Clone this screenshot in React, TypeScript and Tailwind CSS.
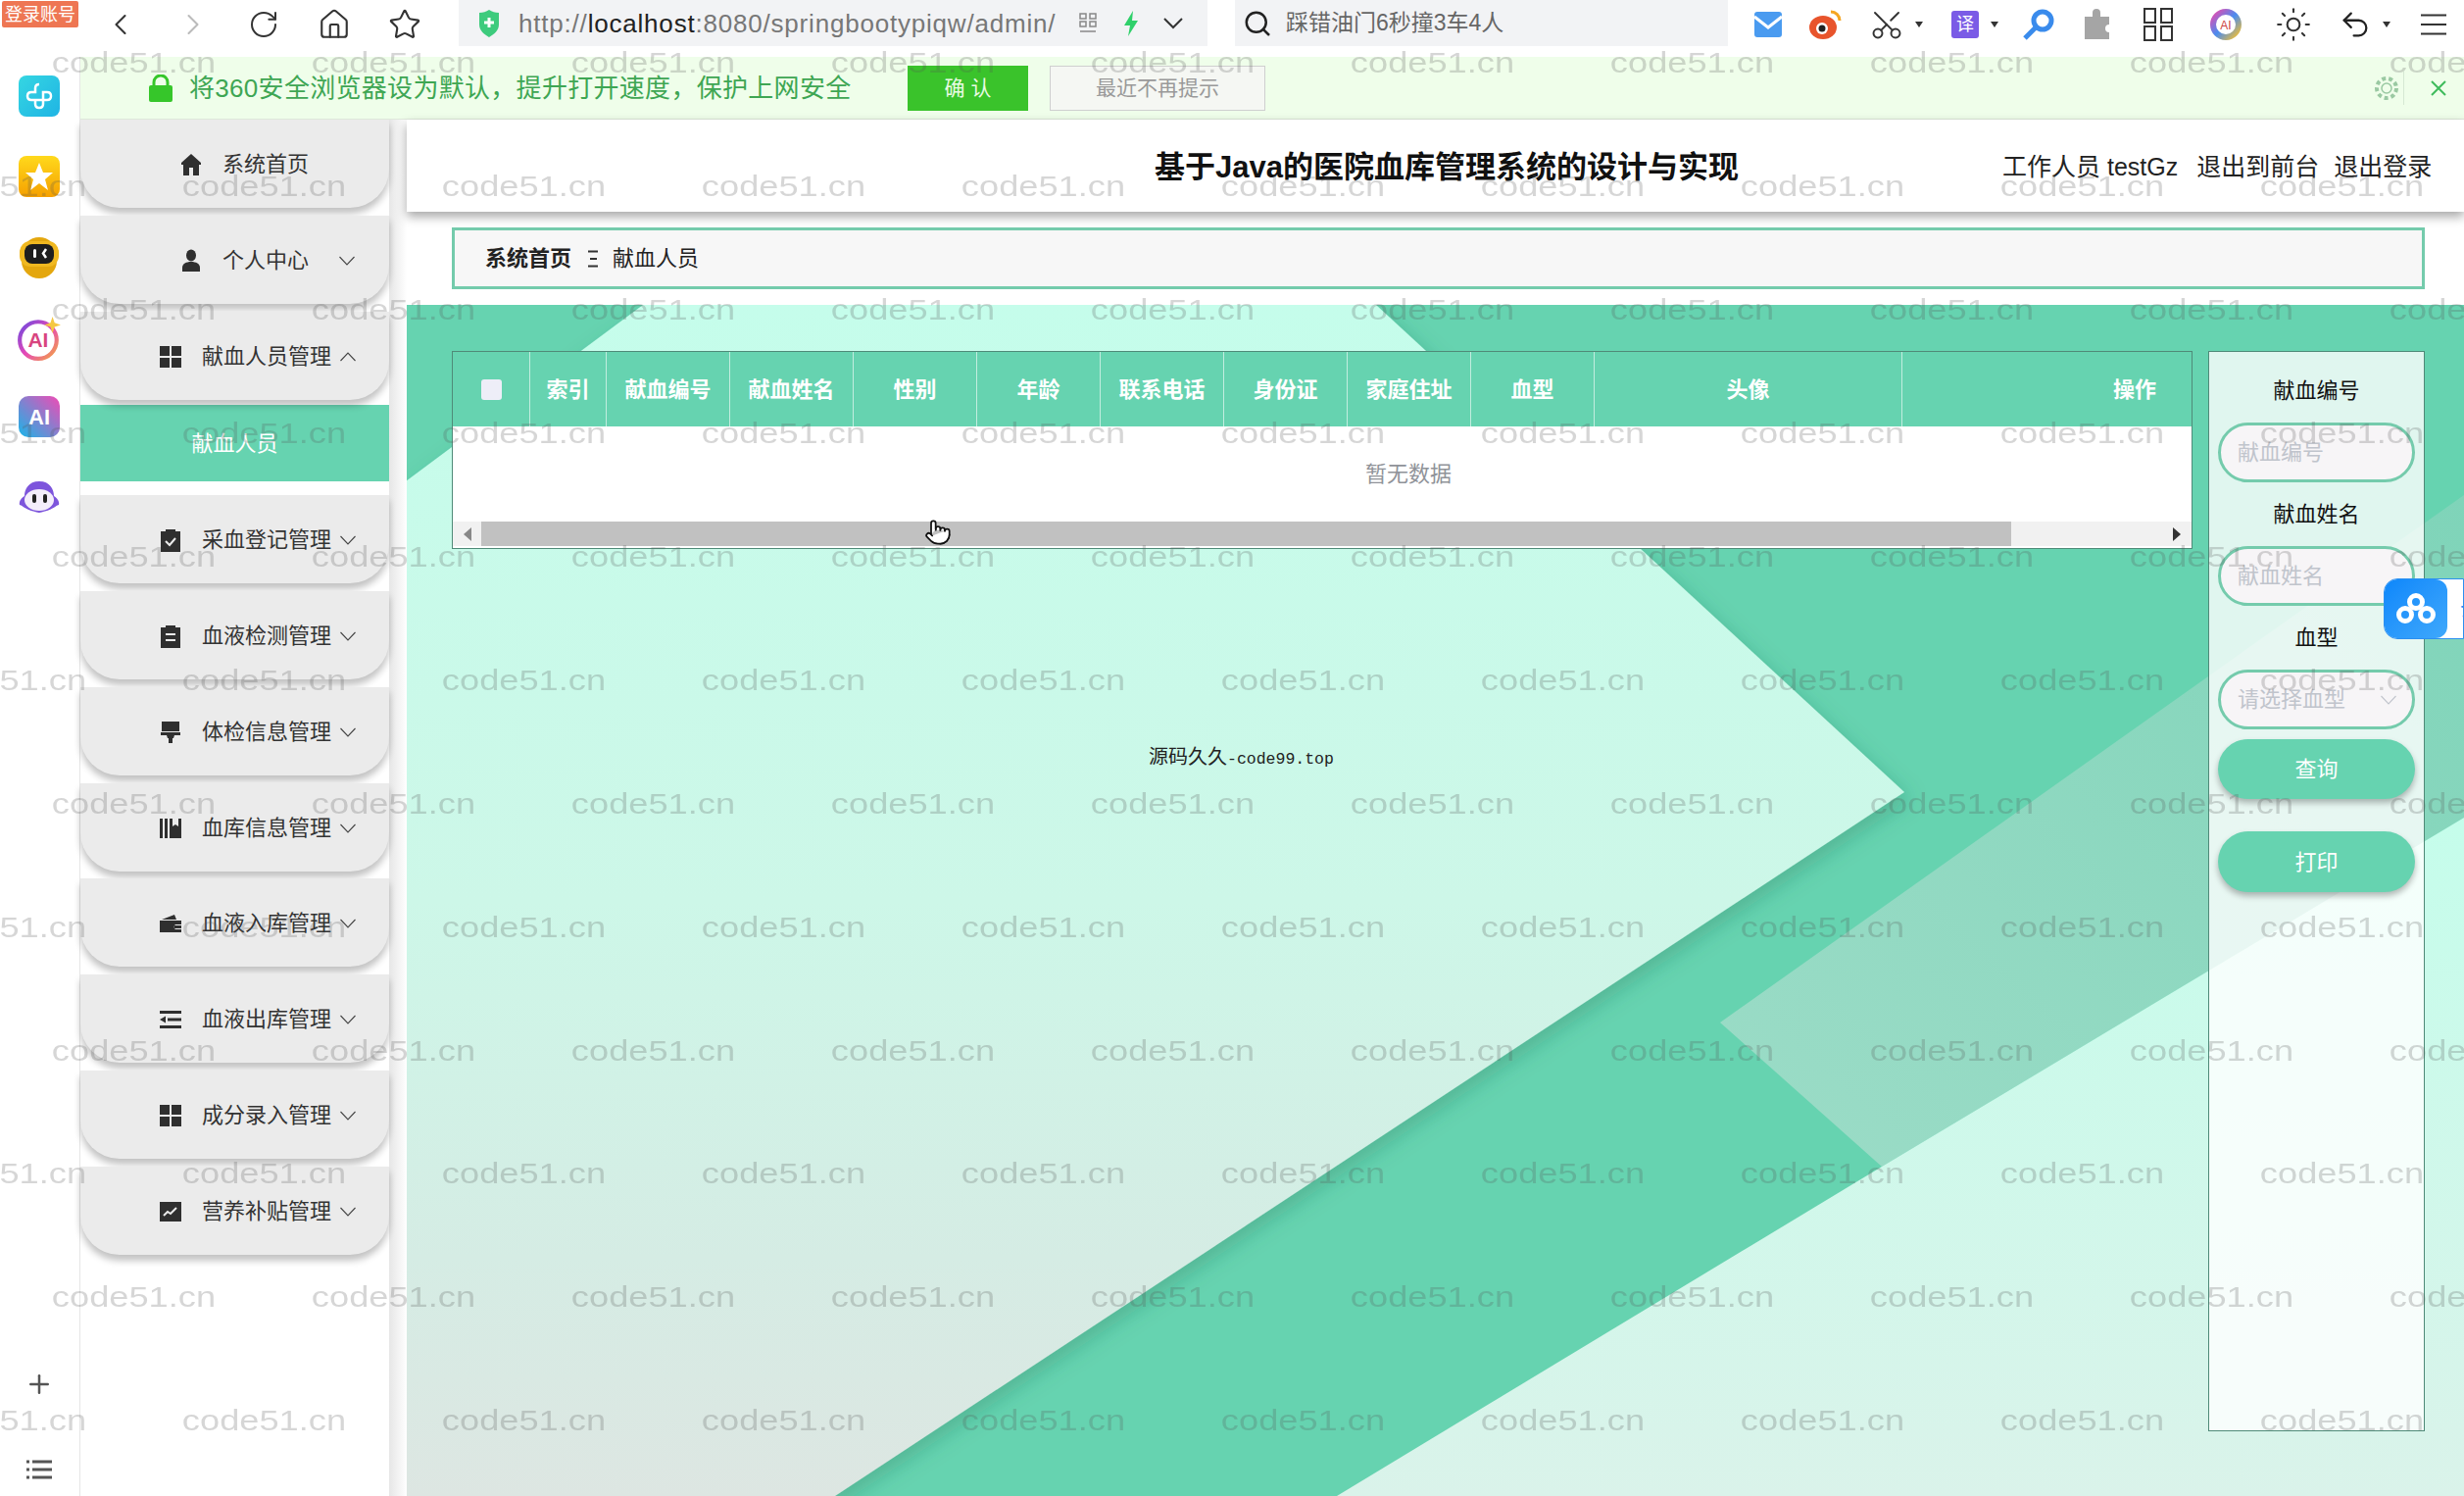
import React from "react";
import { ChevronLeft, ChevronRight, RotateCw, Home, Star, Search, Scissors, Sun, Undo2, Plus, Pointer } from "lucide-react";

const Chev = ({ up = false, light = false }: { up?: boolean; light?: boolean }) => (
  <svg width="16" height="10" viewBox="0 0 16 10" className="shrink-0">
    <polyline points={up ? "0.5,9 8,1 15.5,9" : "0.5,1 8,9 15.5,1"} fill="none" stroke={light ? "#c0c4cc" : "#444"} strokeWidth="1.1" />
  </svg>
);

const I = ({ children }: { children: React.ReactNode }) => (
  <svg width="24" height="24" viewBox="0 0 24 24" fill="#2f2f2f" className="shrink-0">{children}</svg>
);

const icons: Record<string, React.ReactNode> = {
  home: <I><path d="M12 1 2 10v2h2v11h6v-8h4v8h6V12h2v-2z" /></I>,
  user: <I><ellipse cx="12" cy="6.5" rx="5" ry="6" /><path d="M3 23v-4c0-4 4-6 9-6s9 2 9 6v4z" /></I>,
  grid: <I><rect x="1" y="1" width="10" height="10" /><rect x="13" y="1" width="10" height="10" /><rect x="1" y="13" width="10" height="10" /><rect x="13" y="13" width="10" height="10" /></I>,
  claim: <I><path d="M2 3h5V1h10v2h5v21H2z" /><path d="m7 13 4 4 6-7" fill="none" stroke="#ebebeb" strokeWidth="2" /></I>,
  order: <I><path d="M2 3h5V1h10v2h5v21H2z" /><path d="M7 10h10M7 16h10" stroke="#ebebeb" strokeWidth="2" /></I>,
  brush: <I><path d="M3 1h18v10H3zM2 12h20v3h-6l-1 3h-1v5h-4v-5H9l-1-3H2z" /></I>,
  book: <I><rect x="1" y="2" width="3" height="20" /><rect x="6" y="2" width="3" height="20" /><path d="M11 2h12v20H11zM14 2v8l3-2 3 2V2z" fillRule="evenodd" /></I>,
  wallet: <I><path d="M3 8 16 3l2 5zM1 9h22v4h-6a3 3 0 0 0 0 5h6v3H1z" /><rect x="16" y="14" width="7" height="3" /></I>,
  fold: <I><rect x="1" y="3" width="22" height="3" /><rect x="9" y="10.5" width="14" height="3" /><rect x="1" y="18" width="22" height="3" /><path d="M1 12l6-3.5v7z" /></I>,
  chart: <I><path d="M1 2h22v20H1z" /><path d="m5 16 4-4 3 2 6-6" fill="none" stroke="#ebebeb" strokeWidth="2" /></I>,
};

const Item = ({ icon, label, chev, up, short }: { icon: string; label: string; chev?: boolean; up?: boolean; short?: boolean }) => (
  <div className={`relative flex h-[90px] mb-[7.75px] items-center rounded-b-[40px] bg-[#ebebeb] pt-[2px] shadow-[0_6px_7px_rgba(0,0,0,0.24)] ${short ? "pl-[101px]" : "pl-[80px]"}`}>
    {icons[icon]}
    <span className="ml-[20px] text-[22px] leading-none text-[#333]">{label}</span>
    {chev && <span className={short ? "ml-[31px]" : "ml-[9px]"}><Chev up={up} /></span>}
  </div>
);

const cols = [79, 78, 126, 126, 126, 126, 126, 126, 126, 126, 314];
const heads = ["", "索引", "献血编号", "献血姓名", "性别", "年龄", "联系电话", "身份证", "家庭住址", "血型", "头像"];

const Field = ({ label, ph, select }: { label: string; ph: string; select?: boolean }) => (
  <>
    <div className="flex h-[65px] items-center justify-center text-[22px] text-[#111]">{label}</div>
    <div className="flex h-[61px] items-center justify-between rounded-full border-[3px] border-[#74cbac] bg-[#f7f5f7] pl-[17px] pr-[16px] text-[22px] text-[#c0c4cc]">
      <span>{ph}</span>
      {select && <Chev light />}
    </div>
  </>
);

const Watermark = () => (
  <div className="pointer-events-none absolute inset-0 z-50 overflow-hidden pt-[2px]">
    {Array.from({ length: 12 }).map((_, r) => (
      <div key={r} className={`flex h-[125.9px] items-center ${r % 2 ? "-ml-[128px]" : "ml-[4px]"}`}>
        {Array.from({ length: 11 }).map((_, c) => (
          <div key={c} className="w-[265px] shrink-0 scale-x-125 text-center font-['Liberation_Sans'] text-[29px] leading-none text-[rgba(85,85,85,0.24)]">code51.cn</div>
        ))}
      </div>
    ))}
  </div>
);

const Background = () => (
  <svg viewBox="415 311 2099 1215" preserveAspectRatio="none" className="absolute inset-0 h-full w-full">
    <defs>
      <linearGradient id="l1" x1="0" y1="0" x2="0" y2="1">
        <stop offset="0" stopColor="#c5fdeb" />
        <stop offset="0.5" stopColor="#cdf7e8" />
        <stop offset="0.8" stopColor="#d5ece4" />
        <stop offset="1" stopColor="#dde6e2" />
      </linearGradient>
      <linearGradient id="l2" x1="0" y1="0" x2="0" y2="1">
        <stop offset="0" stopColor="#c5fdeb" />
        <stop offset="1" stopColor="#daf3ea" />
      </linearGradient>
      <linearGradient id="l3" x1="0" y1="1" x2="1" y2="0">
        <stop offset="0" stopColor="#9cdcc7" />
        <stop offset="1" stopColor="#7fd4b9" />
      </linearGradient>
      <filter id="sh" x="-10%" y="-10%" width="120%" height="120%">
        <feDropShadow dx="6" dy="8" stdDeviation="10" floodColor="#1d6f55" floodOpacity="0.28" />
      </filter>
    </defs>
    <rect x="415" y="311" width="2099" height="1215" fill="#66d3b0" />
    <polygon points="1755,1043 2514,505 2514,834 1920,1190" fill="url(#l3)" />
    <polygon points="1364,1526 1920,1190 2514,834 2514,1526" fill="url(#l2)" />
    <polygon points="656,311 1404,311 1943,808 852,1526 414,1526 414,491" fill="url(#l1)" filter="url(#sh)" />
  </svg>
);

const Rail = () => (
  <div className="flex w-[82px] shrink-0 flex-col items-center border-r border-[#e6e6e6] bg-white pr-[1px]">
    <svg width="42" height="42" viewBox="0 0 42 42" className="mt-[19px]">
      <defs><linearGradient id="a1" x1="0" y1="0" x2="1" y2="1"><stop offset="0" stopColor="#35d6e2" /><stop offset="1" stopColor="#1fb4e4" /></linearGradient></defs>
      <rect width="42" height="42" rx="8" fill="url(#a1)" />
      <path d="M21 9c-3 0-4 2-4 4v4h-4c-2 0-4 1-4 4s2 4 4 4h16c2 0 4-1 4-4s-2-4-4-4h-4v12c0 2-1 4-4 4s-4-2-4-4v-4" fill="none" stroke="#fff" strokeWidth="2.5" />
    </svg>
    <svg width="42" height="42" viewBox="0 0 42 42" className="mt-[40px]">
      <defs><linearGradient id="a2" x1="0" y1="0" x2="0" y2="1"><stop offset="0" stopColor="#ffd91c" /><stop offset="1" stopColor="#f5a000" /></linearGradient></defs>
      <rect width="42" height="42" rx="8" fill="url(#a2)" />
      <polygon points="21,7 25,17 35,17 27,24 30,35 21,28 12,35 15,24 7,17 17,17" fill="#fff" />
    </svg>
    <svg width="42" height="42" viewBox="0 0 42 42" className="mt-[41px]">
      <rect x="3" y="0" width="36" height="42" rx="18" fill="#e4a70e" />
      <rect x="1" y="4" width="40" height="26" rx="11" fill="#f0b820" />
      <rect x="6" y="7" width="30" height="20" rx="8" fill="#1e1e1e" />
      <rect x="15" y="12" width="3" height="9" rx="1.5" fill="#fff" />
      <path d="M28 12l-3 4.5 3 4.5" fill="none" stroke="#fff" strokeWidth="2.5" />
    </svg>
    <svg width="46" height="46" viewBox="0 0 44 44" className="mt-[38px]">
      <defs><linearGradient id="a4" x1="0" y1="0" x2="1" y2="1"><stop offset="0" stopColor="#6a49e0" /><stop offset="0.5" stopColor="#e548b8" /><stop offset="1" stopColor="#f4a640" /></linearGradient></defs>
      <circle cx="21" cy="24" r="18" fill="none" stroke="url(#a4)" strokeWidth="4" />
      <text x="21" y="31" textAnchor="middle" fontSize="20" fontWeight="700" fill="#d8457f" fontFamily="Liberation Sans">AI</text>
      <polygon points="35,1 37,7 43,9 37,11 35,17 33,11 27,9 33,7" fill="#f5c842" />
    </svg>
    <svg width="42" height="42" viewBox="0 0 42 42" className="mt-[36px]">
      <defs><linearGradient id="a5" x1="0" y1="1" x2="1" y2="0"><stop offset="0" stopColor="#19b5e8" /><stop offset="1" stopColor="#f04bb5" /></linearGradient></defs>
      <rect width="42" height="42" rx="10" fill="url(#a5)" />
      <text x="21" y="29" textAnchor="middle" fontSize="22" fontWeight="700" fill="#fff" fontFamily="Liberation Sans">AI</text>
    </svg>
    <svg width="42" height="34" viewBox="0 0 42 34" className="mt-[44px]">
      <path d="M21 1C10 1 6 9 6 16c-3 2-6 5-5 9 4 1 5 5 20 8 15-3 16-7 20-8 1-4-2-7-5-9 0-7-4-15-15-15z" fill="#7d55dc" />
      <ellipse cx="21" cy="20" rx="15" ry="11" fill="#f4eefb" />
      <rect x="14" y="14" width="4" height="9" rx="2" fill="#222" />
      <rect x="25" y="14" width="4" height="9" rx="2" fill="#222" />
    </svg>
    <div className="mt-auto mb-[11px] flex flex-col items-center">
      <Plus size={30} color="#555" strokeWidth={2} />
      <svg width="26" height="20" viewBox="0 0 26 20" className="mt-[62px] mb-[6px]">
        <path d="M6 2h20M6 10h20M6 18h20M0 2h3M0 10h3M0 18h3" stroke="#555" strokeWidth="3" />
      </svg>
    </div>
  </div>
);

const TopBar = () => (
  <div className="relative flex h-[58px] shrink-0 items-start bg-white">
    <div className="mt-[1px] ml-[2px] flex h-[27px] w-[78px] items-center justify-center rounded-[2px] bg-[#ee7653] text-[18px] leading-none text-white">登录账号</div>
    <div className="ml-[25px] flex h-[50px] items-center gap-[38px]">
      <ChevronLeft size={36} strokeWidth={1.4} color="#333" />
      <ChevronRight size={36} strokeWidth={1.4} color="#bbb" />
      <RotateCw size={32} strokeWidth={1.5} color="#333" />
      <Home size={34} strokeWidth={1.5} color="#333" className="ml-[1px]" />
      <Star size={34} strokeWidth={1.5} color="#333" />
    </div>
    <div className="ml-[38px] flex h-[47px] w-[764px] items-center bg-[#f2f3f5] pl-[19px] text-[26px] text-[#777]">
      <svg width="24" height="28" viewBox="0 0 24 28" className="shrink-0"><path d="M2 3c4 0 7-1 10-3 3 2 6 3 10 3v12c0 6-5 10-10 13C7 25 2 21 2 15z" fill="#3ecb7d" /><path d="M12 8v10M7 13h10" stroke="#fff" strokeWidth="3" /></svg>
      <span className="ml-[18px] leading-none tracking-[0.8px]">http://<span className="text-[#222]">localhost</span>:8080/springbootypiqw/admin/</span>
      <svg width="18" height="22" viewBox="0 0 18 22" className="ml-[24px] shrink-0"><g fill="none" stroke="#888" strokeWidth="1.5"><rect x="1" y="1" width="6" height="5" /><rect x="11" y="1" width="6" height="5" /><rect x="1" y="9" width="6" height="5" /><rect x="11" y="9" width="6" height="5" /><path d="M1 19h16" /></g></svg>
      <svg width="16" height="26" viewBox="0 0 16 26" className="ml-[27px] shrink-0"><path d="M10 0 1 15h6l-2 11 10-16H9z" fill="#2fd06a" /></svg>
      <svg width="20" height="12" viewBox="0 0 20 12" className="ml-[25px] shrink-0"><polyline points="1,1 10,10 19,1" fill="none" stroke="#333" strokeWidth="2" /></svg>
    </div>
    <div className="ml-[28px] flex h-[47px] w-[503px] items-center bg-[#f2f3f5] pl-[8px] text-[23px] text-[#666]">
      <Search size={30} strokeWidth={2} color="#222" />
      <span className="ml-[14px]">踩错油门6秒撞3车4人</span>
    </div>
    <div className="flex h-[50px] flex-1 items-center">
      <svg width="28" height="26" viewBox="0 0 28 26" className="ml-[27px]"><rect width="28" height="26" rx="3" fill="#4a9bf0" /><path d="M0 5l14 11L28 5" fill="none" stroke="#fff" strokeWidth="3" /></svg>
      <svg width="34" height="30" viewBox="0 0 34 30" className="ml-[27px]"><ellipse cx="15" cy="18" rx="14" ry="12" fill="#e8542c" /><circle cx="14" cy="19" r="6" fill="#fff" /><circle cx="14" cy="19" r="3.5" fill="#222" /><path d="M23 2c5 0 9 4 9 9" fill="none" stroke="#f5a623" strokeWidth="3" /></svg>
      <Scissors size={36} strokeWidth={1.3} color="#333" className="ml-[28px] -rotate-90" />
      <span className="ml-[11px] h-0 w-0 border-x-[4px] border-t-[6px] border-x-transparent border-t-[#333]" />
      <div className="ml-[29px] flex h-[28px] w-[28px] items-center justify-center rounded-[3px] bg-[#7a5be6] text-[18px] leading-none text-white">译</div>
      <span className="ml-[12px] h-0 w-0 border-x-[4px] border-t-[6px] border-x-transparent border-t-[#333]" />
      <svg width="34" height="34" viewBox="0 0 34 34" className="ml-[24px]"><circle cx="21" cy="13" r="9" fill="none" stroke="#3a8bec" strokeWidth="5" /><path d="M14 20 3 31" stroke="#3a8bec" strokeWidth="5" /></svg>
      <svg width="30" height="32" viewBox="0 0 30 32" className="ml-[27px]"><path d="M11 4a4 4 0 0 1 8 0v4h9v8a4 4 0 0 0 0 8v7H3V8h8z" fill="#a5a5a5" /></svg>
      <svg width="30" height="34" viewBox="0 0 30 34" className="ml-[33px]"><g fill="none" stroke="#333" strokeWidth="2"><rect x="1" y="1" width="11" height="14" /><rect x="18" y="1" width="11" height="14" /><rect x="1" y="19" width="11" height="14" /><rect x="18" y="19" width="11" height="14" /></g></svg>
      <svg width="34" height="36" viewBox="0 0 34 36" className="ml-[37px]"><defs><linearGradient id="c1" x1="0" y1="0" x2="1" y2="1"><stop offset="0" stopColor="#e64bb0" /><stop offset="0.5" stopColor="#4a8cf0" /><stop offset="1" stopColor="#f5c030" /></linearGradient></defs><circle cx="17" cy="18" r="13" fill="none" stroke="url(#c1)" strokeWidth="6" /><text x="17" y="23" textAnchor="middle" fontSize="12" fill="#c44" fontFamily="Liberation Sans">AI</text></svg>
      <Sun size={38} strokeWidth={1.3} color="#333" className="ml-[33px]" />
      <Undo2 size={34} strokeWidth={1.6} color="#222" className="ml-[27px]" />
      <span className="ml-[11px] h-0 w-0 border-x-[4px] border-t-[6px] border-x-transparent border-t-[#333]" />
      <svg width="26" height="22" viewBox="0 0 26 22" className="ml-[31px]"><path d="M0 1.5h26M0 11h26M0 20.5h26" stroke="#333" strokeWidth="2" /></svg>
    </div>
  </div>
);

const Banner = () => (
  <div className="flex h-[64px] shrink-0 items-center border-b border-[#dfe9db] bg-[#effeea] pl-[70px]">
    <svg width="24" height="28" viewBox="0 0 24 28" className="shrink-0"><path d="M5 12V8a7 7 0 0 1 14 0v4" fill="none" stroke="#36c62a" strokeWidth="3" /><rect y="11" width="24" height="17" rx="2" fill="#36c62a" /></svg>
    <span className="ml-[17px] w-[678px] shrink-0 whitespace-nowrap text-[26px] leading-none tracking-[0.3px] text-[#3ea653]">将360安全浏览器设为默认，提升打开速度，保护上网安全</span>
    <div className="ml-[55px] flex h-[46px] w-[123px] items-center justify-center bg-[#3ac32b] text-[21px] text-[#e8fbe3]">确 认</div>
    <div className="ml-[22px] flex h-[46px] w-[220px] items-center justify-center border border-[#cfcfcf] bg-[#f5f7f3] text-[21px] text-[#999]">最近不再提示</div>
    <div className="ml-auto flex items-center pr-[17px]">
      <svg width="30" height="30" viewBox="0 0 30 30"><circle cx="15" cy="15" r="5" fill="none" stroke="#9ac9a2" strokeWidth="1.5" /><circle cx="15" cy="15" r="10" fill="none" stroke="#9ac9a2" strokeWidth="4" strokeDasharray="4 3" /></svg>
      <div className="ml-[2px] h-[34px] w-px bg-[#d6e8d3]" />
      <svg width="18" height="18" viewBox="0 0 18 18" className="ml-[26px]"><path d="M2 2l14 14M16 2 2 16" stroke="#3fbb5c" strokeWidth="2" /></svg>
    </div>
  </div>
);

const Table = () => (
  <div className="h-[202px] w-[1776px] overflow-hidden border border-[#4f8a78] bg-white">
    <div className="flex h-[76px] bg-[#66d3b0] text-[22px] font-bold text-white">
      {heads.map((h, i) => (
        <div key={i} style={{ width: cols[i] }} className="flex shrink-0 items-center justify-center border-r border-[rgba(255,255,255,0.6)]">
          {i === 0 ? <span className="block h-[21px] w-[21px] rounded-[3px] bg-[#eeeef8]" /> : h}
        </div>
      ))}
      <div className="flex w-[474px] shrink-0 items-center justify-center">操作</div>
    </div>
    <div className="flex h-[97px] items-center justify-center pl-[176px] text-[22px] text-[#909399]">暂无数据</div>
    <div className="flex h-[25px] items-center bg-[#f1f1f1]">
      <svg width="8" height="14" viewBox="0 0 8 14" className="ml-[11px]"><polygon points="8,0 0,7 8,14" fill="#888" /></svg>
      <div className="relative ml-[10px] h-full w-[1561px] bg-[#c1c1c1]">
        <Pointer size={28} fill="#fff" color="#111" strokeWidth={1.5} className="absolute left-[452px] -top-[3px]" />
      </div>
      <svg width="8" height="14" viewBox="0 0 8 14" className="ml-[165px]"><polygon points="0,0 8,7 0,14" fill="#333" /></svg>
    </div>
  </div>
);

const FilterPanel = () => (
  <div className="ml-[16px] h-[1102px] w-[221px] border border-[#4f8a78] bg-[rgba(255,255,255,0.8)] px-[9px] pt-[7px]">
    <Field label="献血编号" ph="献血编号" />
    <Field label="献血姓名" ph="献血姓名" />
    <Field label="血型" ph="请选择血型" select />
    <div className="mt-[10px] flex h-[61px] items-center justify-center rounded-full bg-[#66d3b0] text-[22px] text-white shadow-[0_4px_6px_rgba(0,0,0,0.28)]">查询</div>
    <div className="mt-[33px] flex h-[62px] items-center justify-center rounded-full bg-[#66d3b0] text-[22px] text-white shadow-[0_4px_6px_rgba(0,0,0,0.28)]">打印</div>
  </div>
);

const BaiduWidget = () => (
  <div className="absolute right-0 top-[590px] z-40 flex h-[62px] w-[82px] overflow-hidden rounded-l-[14px] border border-[#2b8ff0] bg-white">
    <div className="flex w-[64px] shrink-0 items-center justify-center rounded-[12px] bg-linear-to-br from-[#0b87fb] to-[#3ea8fb]">
      <svg width="40" height="34" viewBox="0 0 40 34"><g fill="none" stroke="#fff" strokeWidth="5"><circle cx="20" cy="10" r="6.5" /><circle cx="9" cy="23" r="6.5" /><circle cx="31" cy="23" r="6.5" /></g></svg>
    </div>
    <span className="ml-[13px] shrink-0 text-[22px] leading-[60px] text-[#2b8ff0]">云</span>
  </div>
);

export default function App() {
  return (
    <div className="relative flex h-[1526px] w-[2514px] flex-col overflow-hidden bg-white font-['Liberation_Sans','Noto_Sans_CJK_SC',sans-serif]">
      <TopBar />
      <div className="flex min-h-0 flex-1">
        <Rail />
        <div className="flex min-w-0 flex-1 flex-col">
          <Banner />
          <div className="flex min-h-0 flex-1">
            <div className="w-[315px] shrink-0">
              <Item icon="home" label="系统首页" short />
              <Item icon="user" label="个人中心" chev short />
              <div className="-mb-[2px]"><Item icon="grid" label="献血人员管理" chev up /></div>
              <div className="mb-[14px] flex h-[78px] items-center justify-center bg-[#66d3b0] text-[22px] text-white">献血人员</div>
              <Item icon="claim" label="采血登记管理" chev />
              <Item icon="order" label="血液检测管理" chev />
              <Item icon="brush" label="体检信息管理" chev />
              <Item icon="book" label="血库信息管理" chev />
              <Item icon="wallet" label="血液入库管理" chev />
              <Item icon="fold" label="血液出库管理" chev />
              <Item icon="grid" label="成分录入管理" chev />
              <Item icon="chart" label="营养补贴管理" chev />
            </div>
            <div className="w-[18px] shrink-0 bg-linear-to-r from-[#e6e6e6] to-white" />
            <div className="flex min-w-0 flex-1 flex-col">
              <div className="relative z-10 flex h-[94px] shrink-0 items-center bg-white pl-[763px] pt-[2px] shadow-[0_5px_10px_rgba(0,0,0,0.35)]">
                <span className="w-[595px] shrink-0 whitespace-nowrap text-[31px] font-bold leading-none text-[#111]">基于Java的医院血库管理系统的设计与实现</span>
                <span className="ml-[270px] whitespace-nowrap text-[25px] leading-none text-[#222]">工作人员 testGz</span>
                <span className="ml-[19px] whitespace-nowrap text-[25px] leading-none text-[#222]">退出到前台</span>
                <span className="ml-[15px] whitespace-nowrap text-[25px] leading-none text-[#222]">退出登录</span>
              </div>
              <div className="mt-[16px] ml-[46px] flex h-[63px] w-[2013px] shrink-0 items-center border-[3px] border-[#74cbac] bg-[#f7f7f7] pl-[31px] text-[22px] text-[#222]">
                <span className="font-bold">系统首页</span>
                <svg width="12" height="18" viewBox="0 0 12 18" className="ml-[16px]"><path d="M1 1.5h10M3 9h7M1 16.5h10" stroke="#333" strokeWidth="2" /></svg>
                <span className="ml-[14px]">献血人员</span>
              </div>
              <div className="relative mt-[16px] min-h-0 flex-1">
                <Background />
                <div className="relative flex pl-[46px] pt-[47px]">
                  <div>
                    <Table />
                    <div className="ml-[711px] mt-[198px] text-[20px] leading-[28px] text-[#222]">
                      源码久久<span className="font-['Liberation_Mono'] text-[16.5px]">-code99.top</span>
                    </div>
                  </div>
                  <FilterPanel />
                </div>
              </div>
            </div>
          </div>
        </div>
      </div>
      <BaiduWidget />
      <Watermark />
    </div>
  );
}
